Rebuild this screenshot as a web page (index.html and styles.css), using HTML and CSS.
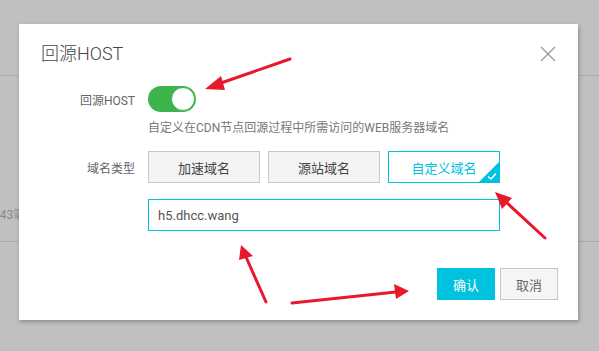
FILE: index.html
```html
<!DOCTYPE html>
<html lang="zh-CN">
<head>
<meta charset="utf-8">
<title>回源HOST</title>
<link rel="stylesheet" href="styles.css">
</head>
<body>
<div class="page">
  <div class="page-row"><span class="page-text">443端口</span></div>
</div>

<div class="modal">
  <div class="modal-header">
    <h2 class="modal-title">回源HOST</h2>
    <svg class="close" width="16" height="16" viewBox="0 0 16 16"><path d="M1 1L15 15M15 1L1 15" stroke="#9a9a9a" stroke-width="1.4" fill="none"/></svg>
  </div>
  <div class="form">
    <div class="label">回源HOST</div>
    <div class="control"><span class="switch"><span class="knob"></span></span></div>
    <div></div>
    <div class="desc">自定义在CDN节点回源过程中所需访问的WEB服务器域名</div>
    <div class="label">域名类型</div>
    <div class="choices">
      <span class="choice">加速域名</span>
      <span class="choice">源站域名</span>
      <span class="choice selected">自定义域名<svg class="corner" width="20" height="20" viewBox="0 0 20 20"><path d="M20 0V20H0Z" fill="#00c1de"/><path d="M9 14.5L12 17L17 11.5" stroke="#fff" stroke-width="1.6" fill="none"/></svg></span>
    </div>
    <div></div>
    <div class="input">h5.dhcc.wang</div>
  </div>
  <div class="footer">
    <span class="btn primary">确认</span>
    <span class="btn">取消</span>
  </div>
</div>

<svg class="arrows" width="599" height="351" viewBox="0 0 599 351">
  <g stroke="#e8192c" stroke-width="3" stroke-linecap="round" fill="#e8192c">
    <line x1="290" y1="59" x2="218" y2="84"/>
    <line x1="545" y1="238" x2="506" y2="202"/>
    <line x1="266" y1="302" x2="246" y2="257"/>
    <line x1="292" y1="303" x2="396" y2="292"/>
  </g>
  <g fill="#e8192c">
    <polygon points="205,89 221,76 225,90"/>
    <polygon points="495,192 512,198 502,209"/>
    <polygon points="241,245 253,256 239,260"/>
    <polygon points="409,291 394,284 396,299"/>
  </g>
</svg>
</body>
</html>
```

FILE: styles.css
```css
html, body {
  margin: 0;
  padding: 0;
}
body {
  width: 599px;
  height: 351px;
  background: #c0c0c0;
  overflow: hidden;
  font-family: Roboto, "Noto Sans CJK SC", sans-serif;
  position: relative;
}
.page {
  padding-top: 75px;
}
.page-row {
  border-top: 1px solid #aaaaaa;
  border-bottom: 1px solid #aaaaaa;
  height: 167px;
  display: flex;
  align-items: flex-end;
  box-sizing: border-box;
}
.page-text {
  font-size: 12px;
  color: #888;
  margin-left: -7px;
  margin-bottom: 18px;
  line-height: 16px;
}
.modal {
  position: absolute;
  left: 19px;
  top: 24px;
  width: 559px;
  height: 296px;
  background: #fff;
  box-shadow: 1px 2px 4px rgba(0, 0, 0, 0.28);
  box-sizing: border-box;
  padding: 17px 20px 0 22px;
}
.modal-header {
  display: flex;
  justify-content: space-between;
  align-items: center;
  height: 26px;
}
.modal-title {
  margin: 0;
  font-size: 18px;
  font-weight: 300;
  color: #444;
  line-height: 26px;
}
.close {
  margin-right: 2px;
}
.form {
  display: grid;
  grid-template-columns: 94px 352px;
  column-gap: 13px;
  margin-top: 19px;
  align-items: center;
}
.label {
  font-size: 12px;
  color: #666;
  text-align: right;
}
.switch {
  display: block;
  width: 48px;
  height: 26px;
  border-radius: 13px;
  background: #3cb44b;
  position: relative;
}
.knob {
  position: absolute;
  right: 1px;
  top: 1px;
  width: 22px;
  height: 22px;
  border-radius: 50%;
  background: #fff;
  border: 1px solid #3cb44b;
}
.desc {
  font-size: 12px;
  color: #777;
  line-height: 18px;
  margin-top: 7px;
  margin-bottom: 14px;
}
.choices {
  display: flex;
  gap: 8px;
}
.choice {
  position: relative;
  width: 112px;
  height: 32px;
  box-sizing: border-box;
  border: 1px solid #c8c8c8;
  background: #f3f3f3;
  color: #444;
  font-size: 13px;
  display: flex;
  align-items: center;
  justify-content: center;
  overflow: hidden;
}
.choice.selected {
  background: #fff;
  border-color: #00c1de;
  color: #00c1de;
}
.corner {
  position: absolute;
  right: 0;
  bottom: 0;
}
.input {
  margin-top: 16px;
  height: 32px;
  box-sizing: border-box;
  border: 1px solid #00c1de;
  padding-left: 9px;
  font-size: 13px;
  color: #555;
  display: flex;
  align-items: center;
}
.footer {
  display: flex;
  justify-content: flex-end;
  gap: 5px;
  margin-top: 37px;
}
.btn {
  width: 58px;
  height: 32px;
  box-sizing: border-box;
  border: 1px solid #c8c8c8;
  background: #f5f5f5;
  color: #666;
  font-size: 13px;
  display: flex;
  align-items: center;
  justify-content: center;
}
.btn.primary {
  background: #00c1de;
  border-color: #00c1de;
  color: #fff;
}
.arrows {
  position: absolute;
  left: 0;
  top: 0;
  pointer-events: none;
}
```
